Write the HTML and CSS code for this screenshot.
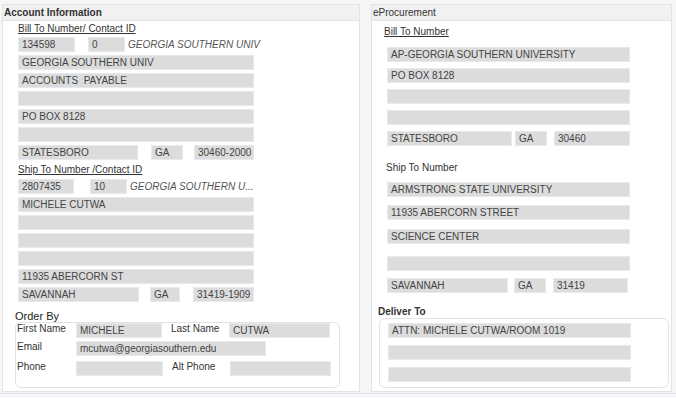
FILE: index.html
```html
<!DOCTYPE html>
<html>
<head>
<meta charset="utf-8">
<link rel="stylesheet" href="styles.css">
</head>
<body>
<div class="page">
  <section class="panel left">
    <div class="panel-head bold">Account Information</div>
    <div class="left-body">
      <div class="lbl-u lbl-first">Bill To Number/ Contact ID</div>
      <div class="stack">
        <div class="row">
          <div class="f w57">134598</div>
          <div class="f w37 ml13">0</div>
          <div class="ital">GEORGIA SOUTHERN UNIV</div>
        </div>
        <div class="f full">GEORGIA SOUTHERN UNIV</div>
        <div class="f full">ACCOUNTS&nbsp; PAYABLE</div>
        <div class="f full"></div>
        <div class="f full">PO BOX 8128</div>
        <div class="f full"></div>
        <div class="row">
          <div class="f w120">STATESBORO</div>
          <div class="f w32 ml13">GA</div>
          <div class="f w60 ml11">30460-2000</div>
        </div>
      </div>
      <div class="lbl-u lbl-ship">Ship To Number /Contact ID</div>
      <div class="stack">
        <div class="row">
          <div class="f w56">2807435</div>
          <div class="f w37 ml16">10</div>
          <div class="ital">GEORGIA SOUTHERN U...</div>
        </div>
        <div class="f full">MICHELE CUTWA</div>
        <div class="f full"></div>
        <div class="f full"></div>
        <div class="f full"></div>
        <div class="f full">11935 ABERCORN ST</div>
        <div class="row">
          <div class="f w121">SAVANNAH</div>
          <div class="f w30 ml11">GA</div>
          <div class="f w61 ml13">31419-1909</div>
        </div>
      </div>
      <div class="order-lbl">Order By</div>
      <div class="order-box">
        <div class="orow">
          <span class="olbl">First Name</span>
          <div class="f w86">MICHELE</div>
          <span class="olbl olbl2">Last Name</span>
          <div class="f w101">CUTWA</div>
        </div>
        <div class="orow">
          <span class="olbl">Email</span>
          <div class="f w190">mcutwa@georgiasouthern.edu</div>
        </div>
        <div class="orow orow3">
          <span class="olbl">Phone</span>
          <div class="f w87"></div>
          <span class="olbl olbl3">Alt Phone</span>
          <div class="f w101"></div>
        </div>
      </div>
    </div>
  </section>
  <section class="panel right">
    <div class="panel-head">eProcurement</div>
    <div class="right-body">
      <div class="lbl-u r-bill">Bill To Number</div>
      <div class="rstack">
        <div class="f rfull">AP-GEORGIA SOUTHERN UNIVERSITY</div>
        <div class="f rfull">PO BOX 8128</div>
        <div class="f rfull"></div>
        <div class="f rfull"></div>
        <div class="row">
          <div class="f w125">STATESBORO</div>
          <div class="f w32 ml3">GA</div>
          <div class="f w76 ml7">30460</div>
        </div>
      </div>
      <div class="r-ship">Ship To Number</div>
      <div class="rstack2">
        <div class="f rfull">ARMSTRONG STATE UNIVERSITY</div>
        <div class="f rfull">11935 ABERCORN STREET</div>
        <div class="f rfull mt1">SCIENCE CENTER</div>
        <div class="f rfull mt4">&nbsp;</div>
        <div class="row mtn1">
          <div class="f w121">SAVANNAH</div>
          <div class="f w32 ml6">GA</div>
          <div class="f w75 ml7">31419</div>
        </div>
      </div>
      <div class="deliver-lbl bold">Deliver To</div>
      <div class="deliver-box">
        <div class="f rfull">ATTN: MICHELE CUTWA/ROOM 1019</div>
        <div class="f rfull"></div>
        <div class="f rfull"></div>
      </div>
    </div>
  </section>
</div>
<div class="below"></div>
</body>
</html>
```

FILE: styles.css
```css
* { box-sizing: border-box; }
html, body { margin: 0; padding: 0; }
body {
  background: #f5f6f8;
  font-family: "Liberation Sans", Arial, sans-serif;
  font-size: 10px;
  color: #333;
  width: 676px;
  height: 398px;
  overflow: hidden;
}
.page {
  display: flex;
  gap: 11px;
  padding: 4px 0 0 2px;
}
.panel {
  background: #fff;
  border: 1px solid #e1e3e7;
  height: 388px;
}
.left { width: 358px; }
.right { width: 301px; }
.panel-head {
  height: 16px;
  line-height: 15px;
  background: #f1f1f1;
  border-bottom: 1px solid #e3e3e3;
  padding-left: 1px;
  color: #333;
}
.bold { font-weight: bold; }

.left-body { padding: 1px 0 0 15px; }
.lbl-u { text-decoration: underline; color: #333; line-height: 14px; }
.lbl-first { margin-bottom: 1px; }
.lbl-ship { margin-top: 2px; line-height: 16px; margin-bottom: 1px; }

.stack { display: flex; flex-direction: column; gap: 3px; }
.row { display: flex; align-items: center; }

.f {
  height: 15px;
  background: #dcdcdc;
  border: 1px solid #e6e9ee;
  line-height: 13px;
  padding-left: 3px;
  color: #444;
  white-space: nowrap;
  overflow: hidden;
}
.full { width: 236px; }
.rfull { width: 243px; }
.w30 { width: 30px; } .w32 { width: 32px; } .w37 { width: 37px; }
.w56 { width: 56px; } .w57 { width: 57px; } .w60 { width: 60px; }
.w61 { width: 61px; } .w75 { width: 75px; } .w76 { width: 76px; }
.w86 { width: 86px; } .w87 { width: 87px; } .w101 { width: 101px; }
.w120 { width: 120px; } .w121 { width: 121px; } .w125 { width: 125px; }
.w190 { width: 190px; }
.ml3 { margin-left: 3px; } .ml6 { margin-left: 6px; } .ml7 { margin-left: 7px; }
.ml11 { margin-left: 11px; } .ml13 { margin-left: 13px; } .ml16 { margin-left: 16px; }
.mt1 { margin-top: 1px; } .mt4 { margin-top: 4px; } .mtn1 { margin-top: -1px; }
.ital { font-style: italic; color: #555; margin-left: 3px; white-space: nowrap; }

.order-lbl { margin: 8px 0 0 -3px; line-height: 12px; font-size: 11px; color: #222; }
.order-box {
  margin-left: -3px;
  width: 325px;
  height: 66px;
  border: 1px solid #e0e2e6;
  border-radius: 6px;
  padding: 0 0 0 1px;
}
.orow { display: flex; align-items: flex-start; margin-bottom: 3px; }
.orow3 { margin-top: 5px; }
.olbl { width: 59px; line-height: 12px; color: #333; }
.olbl2 { width: 58px; margin-left: 9px; }
.olbl3 { width: 58px; margin-left: 9px; }

.right-body { padding: 0 0 0 6px; }
.r-bill { margin: 4px 0 8px 6px; }
.rstack { display: flex; flex-direction: column; gap: 6px; margin-left: 9px; }
.r-ship { margin: 15px 0 7px 8px; line-height: 14px; color: #333; }
.rstack2 { display: flex; flex-direction: column; gap: 8px; margin-left: 9px; }
.deliver-lbl { margin-top: 13px; line-height: 12px; }
.deliver-box {
  margin-left: 1px;
  width: 290px;
  height: 70px;
  border: 1px solid #e0e2e6;
  border-radius: 6px;
  padding: 4px 0 0 8px;
  display: flex;
  flex-direction: column;
  gap: 7px;
}
.below {
  margin: 1px 0 0 0;
  height: 10px;
  border-top: 1px solid #e1e3e7;
  background: #f5f6f8;
}
```
